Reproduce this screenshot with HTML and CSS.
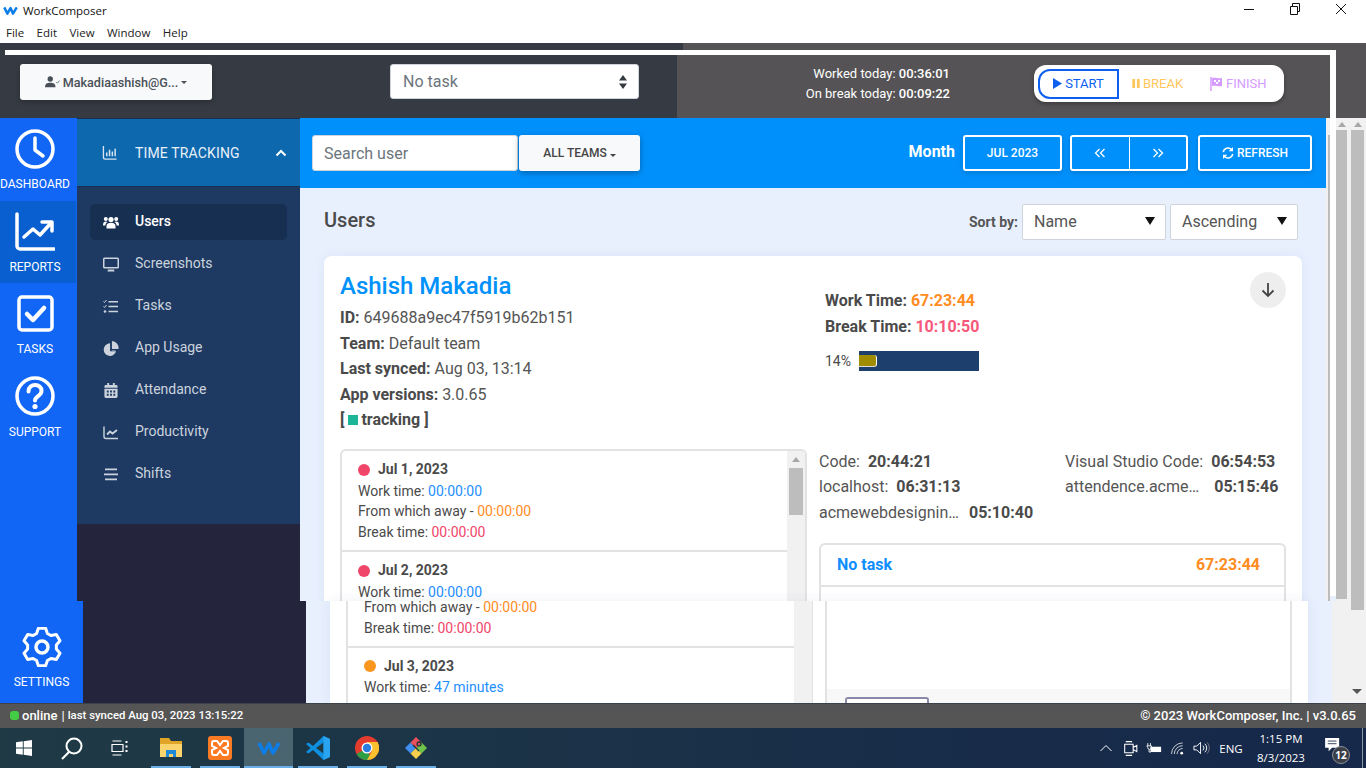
FILE: index.html
```html
<!DOCTYPE html>
<html lang="en">
<head>
<meta charset="utf-8">
<title>WorkComposer</title>
<link rel="stylesheet" href="styles.css">
</head>
<body>
<header class="titlebar">
  <svg class="app-logo" viewBox="0 0 24 16"><path d="M2 3l5 10 5-9 4 9 6-10" fill="none" stroke="#0d7ee8" stroke-width="4" stroke-linejoin="round"/></svg>
  <span class="app-name">WorkComposer</span>
  <div class="winctl">
    <svg viewBox="0 0 12 12"><path d="M1 6.5h10" stroke="#111" stroke-width="1"/></svg>
    <svg viewBox="0 0 12 12"><path d="M1.500 3.500h7v8h-7zM3.500 3.500v-3h7v8h-2" fill="none" stroke="#111"/></svg>
    <svg viewBox="0 0 12 12"><path d="M1 1l10 10M11 1L1 11" stroke="#111"/></svg>
  </div>
</header>
<nav class="menubar"><span>File</span><span>Edit</span><span>View</span><span>Window</span><span>Help</span></nav>

<section class="pane-top">
  <div class="strip"><div class="strip-l"></div><div class="strip-r"></div></div>
  <div class="rule"><div class="rule-l"></div><div class="rule-m"></div><div class="rule-r"></div></div>
  <div class="head">
    <div class="head-l">
      <button class="user-btn">
        <svg class="i-user" viewBox="0 0 20 16"><circle cx="7" cy="4" r="3.600" fill="#495057"/><path d="M0 15c0-5 3-6 7-6s7 1 7 6z" fill="#495057"/><path d="M15 8l1.500 1.500L19.500 6" fill="none" stroke="#495057"/></svg>
        <span>Makadiaashish@G...</span><i class="caret"></i>
      </button>
      <div class="task-select"><span>No task</span>
        <svg class="updown" viewBox="0 0 8 14"><path d="M4 0l4 5.500H0zM4 14l4-5.500H0z" fill="#343a40"/></svg>
      </div>
    </div>
    <div class="head-r">
      <div class="today"><div>Worked today: <b>00:36:01</b></div><div>On break today: <b>00:09:22</b></div></div>
      <div class="timer">
        <div class="t-start"><svg viewBox="0 0 10 12"><path d="M0 0l10 6-10 6z" fill="#0d5ff0"/></svg>START</div>
        <div class="t-break"><svg viewBox="0 0 8 12"><path d="M0 1h3v10H0zM5 1h3v10H5z" fill="#ffc65c"/></svg>BREAK</div>
        <div class="t-finish"><svg viewBox="0 0 13 14"><path d="M1 0v14" stroke="#d69bff" stroke-width="1.500"/><path d="M2 1c4-1 6 1 10 0v8c-4 1-6-1-10 0z" fill="#d69bff"/><path d="M4 3h2v2H4zM8 3h2v2H8zM6 5h2v2H6z" fill="#fff"/></svg>FINISH</div>
      </div>
    </div>
    <div class="head-w"></div>
    <div class="head-e"></div>
  </div>
  <div class="body">
    <aside class="rail">
      <a class="rail-item">
        <svg viewBox="0 0 40 40"><circle cx="20" cy="20" r="18" fill="none" stroke="#fff" stroke-width="3.500"/><path d="M20 9v12l8 6" fill="none" stroke="#fff" stroke-width="3.500" stroke-linecap="round" stroke-linejoin="round"/></svg>
        <span>DASHBOARD</span>
      </a>
      <a class="rail-item active">
        <svg viewBox="0 0 40 40"><path d="M2 2v32a3 3 0 0 0 3 3h34" fill="none" stroke="#fff" stroke-width="3.500" stroke-linecap="round"/><path d="M9 25l9-8 7 6 11-12M27 10h10v9" fill="none" stroke="#fff" stroke-width="3.500" stroke-linecap="round" stroke-linejoin="round"/></svg>
        <span>REPORTS</span>
      </a>
      <a class="rail-item">
        <svg viewBox="0 0 40 40"><rect x="4" y="3" width="33" height="33" rx="3" fill="none" stroke="#fff" stroke-width="3.500"/><path d="M12 20l6 6 11-12" fill="none" stroke="#fff" stroke-width="4.500" stroke-linecap="round" stroke-linejoin="round"/></svg>
        <span>TASKS</span>
      </a>
      <a class="rail-item">
        <svg viewBox="0 0 40 40"><circle cx="20" cy="20" r="18" fill="none" stroke="#fff" stroke-width="3.500"/><path d="M13.500 15.500c0-9 13.500-8 13-.5 0 5-6.500 5-6.500 9.500" fill="none" stroke="#fff" stroke-width="4" stroke-linecap="round"/><circle cx="20" cy="30.500" r="2.600" fill="#fff"/></svg>
        <span>SUPPORT</span>
      </a>
    </aside>
    <aside class="side">
      <div class="side-head">
        <svg class="si" viewBox="0 0 16 16"><path d="M1 1v12a2 2 0 0 0 2 2h12" fill="none" stroke="#d8e4f0" stroke-width="1.400"/><path d="M4.500 8v4M7.500 5v7M10.500 7v5M13.500 4v8" stroke="#d8e4f0" stroke-width="1.600"/></svg>
        <span class="side-title">TIME TRACKING</span>
        <svg class="chev" viewBox="0 0 12 8"><path d="M1.500 6.500L6 2l4.500 4.500" fill="none" stroke="#fff" stroke-width="2"/></svg>
      </div>
      <ul class="side-nav">
        <li class="on"><svg class="si" viewBox="0 0 16 14"><circle cx="8" cy="4" r="2.600"/><circle cx="2.800" cy="3.400" r="2"/><circle cx="13.200" cy="3.400" r="2"/><path d="M3.500 13v-2.500C3.500 8 5.500 7.300 8 7.300s4.500.7 4.500 3.200V13zM0 9.500C0 7 1 6 3 6l1.500.6C3 7.500 2.500 8.500 2.500 10H0zM16 9.500C16 7 15 6 13 6l-1.500.6c1.500.9 2 1.900 2 3.400H16z"/></svg><span>Users</span></li>
        <li><svg class="si" viewBox="0 0 16 14"><path d="M1.500 0h13A1.500 1.500 0 0 1 16 1.500v8a1.500 1.500 0 0 1-1.500 1.500h-13A1.500 1.500 0 0 1 0 9.500v-8A1.500 1.500 0 0 1 1.500 0zM1.500 1.500v8h13v-8zM5 12h6l.5 2h-7z"/></svg><span>Screenshots</span></li>
        <li><svg class="si" viewBox="0 0 16 14"><path d="M.5 2L1.500 3 3.500.5M.5 7L1.500 8l2-2.500" fill="none" stroke="currentColor" stroke-width="1"/><circle cx="2" cy="12" r="1.300"/><path d="M5.500 1.500H15v1.500H5.500zM5.500 6.300H15v1.500H5.500zM5.500 11.200H15v1.500H5.500z"/></svg><span>Tasks</span></li>
        <li><svg class="si" viewBox="0 0 16 16"><path d="M7 2.500a6.700 6.700 0 1 0 6.400 8.500H7zM9 0v8.500h7A7.500 7.500 0 0 0 9 0zM9 10h3.500l.5-.5H9z"/></svg><span>App Usage</span></li>
        <li><svg class="si" viewBox="0 0 14 16"><path d="M3 0h2v2h4V0h2v2h1.500A1.500 1.500 0 0 1 14 3.500V5H0V3.500A1.500 1.500 0 0 1 1.500 2H3zM0 6h14v8.500a1.500 1.500 0 0 1-1.500 1.500h-11A1.500 1.500 0 0 1 0 14.500z"/><path d="M2.500 8h2v2h-2zM6 8h2v2H6zM9.500 8h2v2h-2zM2.500 11.500h2v2h-2zM6 11.500h2v2H6zM9.500 11.500h2v2h-2z" fill="#1e3a63"/></svg><span>Attendance</span></li>
        <li><svg class="si" viewBox="0 0 16 14"><path d="M1 1v10a2 2 0 0 0 2 2h12" fill="none" stroke="currentColor" stroke-width="1.400"/><path d="M4 9l3-3 2.500 2L14 4.500" fill="none" stroke="currentColor" stroke-width="1.800"/></svg><span>Productivity</span></li>
        <li><svg class="si" viewBox="0 0 16 14"><path d="M2 1h12v1.700H2zM1 6h14v1.700H1zM2 11h12v1.700H2z"/></svg><span>Shifts</span></li>
      </ul>
    </aside>
    <main class="main">
      <div class="toolbar">
        <div class="search">Search user</div>
        <button class="teams">ALL TEAMS<i class="caret"></i></button>
        <span class="month">Month</span>
        <button class="tb-btn b-date">JUL 2023</button>
        <div class="tb-btn b-group">
          <span><svg viewBox="0 0 12 10"><path d="M5.500 1L1.500 5l4 4M10.500 1L6.500 5l4 4" fill="none" stroke="#fff" stroke-width="1.300"/></svg></span>
          <span><svg viewBox="0 0 12 10"><path d="M1.500 1l4 4-4 4M6.500 1l4 4-4 4" fill="none" stroke="#fff" stroke-width="1.300"/></svg></span>
        </div>
        <button class="tb-btn b-refresh"><svg viewBox="0 0 14 14"><path d="M1.500 6A5.500 5.500 0 0 1 11 3M12.500 8A5.500 5.500 0 0 1 3 11" fill="none" stroke="#fff" stroke-width="1.800"/><path d="M12.800 0v5h-5zM1.200 14V9h5z" fill="#fff"/></svg>REFRESH</button>
      </div>
      <div class="content">
        <div class="title-row">
          <h2>Users</h2>
          <label class="sort-label">Sort by:</label>
          <div class="fake-select s-name">Name<i class="tri"></i></div>
          <div class="fake-select s-order">Ascending<i class="tri"></i></div>
        </div>
        <article class="card">
          <div class="card-top">
            <div class="who">
              <h3>Ashish Makadia</h3>
              <p><b>ID:</b> 649688a9ec47f5919b62b151</p>
              <p><b>Team:</b> Default team</p>
              <p><b>Last synced:</b> Aug 03, 13:14</p>
              <p><b>App versions:</b> 3.0.65</p>
              <p><b>[ <i class="sq"></i>tracking ]</b></p>
            </div>
            <div class="totals">
              <p><b>Work Time: <em class="orange">67:23:44</em></b></p>
              <p><b>Break Time: <em class="pink">10:10:50</em></b></p>
              <div class="ratio"><span>14%</span><div class="bar"><div class="fill"></div></div></div>
            </div>
            <div class="round"><svg viewBox="0 0 14 16"><path d="M7 1v13M1.500 8.500L7 14l5.500-5.500" fill="none" stroke="#444" stroke-width="1.800"/></svg></div>
          </div>
          <div class="card-bottom">
            <div class="days">
              <div class="days-list">
                <div class="day">
                  <div class="day-date"><i class="dot red"></i>Jul 1, 2023</div>
                  <div>Work time: <span class="blue">00:00:00</span></div>
                  <div>From which away - <span class="orange">00:00:00</span></div>
                  <div>Break time: <span class="red-t">00:00:00</span></div>
                </div>
                <div class="day">
                  <div class="day-date"><i class="dot red"></i>Jul 2, 2023</div>
                  <div>Work time: <span class="blue">00:00:00</span></div>
                </div>
              </div>
              <div class="days-scroll"><i class="up"></i><div class="days-thumb"></div></div>
            </div>
            <div class="usage">
              <div class="apps">
                <div><span>Code:</span><b>20:44:21</b></div>
                <div><span>Visual Studio Code:</span><b>06:54:53</b></div>
                <div><span>localhost:</span><b>06:31:13</b></div>
                <div class="gap-w"><span>attendence.acme…</span><b>05:15:46</b></div>
                <div class="gap-x"><span>acmewebdesignin…</span><b>05:10:40</b></div>
              </div>
              <div class="taskbox">
                <div class="taskbox-head"><span class="blue">No task</span><span class="orange">67:23:44</span></div>
              </div>
            </div>
          </div>
        </article>
      </div>
    </main>
    <div class="gutter">
      <div class="g-line"><div class="g-thumb"></div></div>
      <div class="g-white"></div>
      <div class="g-track">
        <div class="sb sb1"><i class="up"></i><div class="sb-thumb"></div></div>
        <div class="sb sb2"><i class="up"></i><div class="sb-thumb"></div></div>
      </div>
    </div>
  </div>
</section>

<section class="pane-low">
  <div class="low-rail">
    <svg viewBox="0 0 40 40"><path d="M14.570 6.560L16.380 1.350H23.620L25.430 6.560L28.930 8.570L34.340 7.540L37.970 13.810L34.360 17.980V22.020L37.970 26.190L34.340 32.460L28.930 31.430L25.430 33.440L23.620 38.650H16.380L14.570 33.440L11.070 31.430L5.660 32.460L2.030 26.190L5.640 22.020V17.980L2.030 13.810L5.660 7.540L11.070 8.570Z" fill="none" stroke="#fff" stroke-width="3" stroke-linejoin="round"/><circle cx="20" cy="20" r="6" fill="none" stroke="#fff" stroke-width="3.500"/></svg>
    <span>SETTINGS</span>
  </div>
  <div class="low-side"></div>
  <div class="low-main">
    <div class="low-card">
      <div class="low-list">
        <div class="low-rows">
          <div class="low-first">From which away - <span class="orange">00:00:00</span></div>
          <div>Break time: <span class="red-t">00:00:00</span></div>
          <div class="low-div"></div>
          <div class="day-date"><i class="dot amber"></i>Jul 3, 2023</div>
          <div>Work time: <span class="blue">47 minutes</span></div>
        </div>
        <div class="low-scroll"></div>
      </div>
      <div class="low-task">
        <div class="low-foot"><div class="foot-btn"></div></div>
      </div>
    </div>
  </div>
  <div class="low-gutter"><div class="low-thumb"></div><i class="down"></i></div>
</section>

<footer class="status">
  <div class="st-l"><i class="online"></i><b class="st-on">online</b><b class="st-sep">|</b><b class="st-sync">last synced Aug 03, 2023 13:15:22</b></div>
  <div class="st-r">© 2023 WorkComposer, Inc. | v3.0.65</div>
</footer>

<div class="taskbar">
  <div class="tb-sys"><svg class="w16" viewBox="0 0 16 16"><path d="M0 2.300l6.800-1v6.300H0zM7.700 1.200L16 0v7.600H7.700zM0 8.500h6.800v6.300L0 13.700zM7.700 8.500H16V16l-8.300-1.200z" fill="#fff"/></svg></div>
  <div class="tb-sys"><svg class="w24" viewBox="0 0 24 24"><circle cx="14" cy="10" r="7.500" fill="none" stroke="#fff" stroke-width="2"/><path d="M9 16l-7 7" stroke="#fff" stroke-width="2.200"/></svg></div>
  <div class="tb-sys"><svg class="w18" viewBox="0 0 18 16"><path d="M1.500 1h9M1.500 15h9M1 4.500h11v7H1z" fill="none" stroke="#fff" stroke-width="1.200"/><path d="M14.500 1h2v2h-2zM14.500 5.500h2v2h-2zM14.500 10h2v2h-2z" fill="#fff"/></svg></div>
  <div class="tb-app">
    <svg class="w24" viewBox="0 0 24 24"><path d="M1 2h9l2 3h11v4H1z" fill="#e0a526"/><path d="M1 8h22v13H1z" fill="#fbd46d"/><path d="M7 14h10v7h-3v-3h-4v3H7z" fill="#1f88d8"/></svg>
  </div>
  <div class="tb-app">
    <svg class="w24" viewBox="0 0 24 24"><rect x="0" y="0" width="24" height="24" rx="3" fill="#fb7a24"/><path d="M6 5h3l3 4 3-4h3a2 2 0 0 1 2 2v3l-4 2 4 2v3a2 2 0 0 1-2 2h-3l-3-4-3 4H6a2 2 0 0 1-2-2v-3l4-2-4-2V7a2 2 0 0 1 2-2z" fill="none" stroke="#fff" stroke-width="2"/></svg>
  </div>
  <div class="tb-app active">
    <svg class="w24" viewBox="0 0 24 16"><path d="M2 3l5 10 5-9 4 9 6-10" fill="none" stroke="#0d7ee8" stroke-width="3.600" stroke-linejoin="round"/></svg>
  </div>
  <div class="tb-app">
    <svg class="w24" viewBox="0 0 24 24"><path d="M17.500 0L7 10 2.500 6.500 0 8l4.500 4L0 16l2.500 1.500L7 14l10.500 10 6.500-3V3z" fill="#0e8fe0"/><path d="M17.500 6.500L10 12l7.500 5.500z" fill="#1f3a45"/><path d="M17.500 0L24 3v18l-6.500 3z" fill="#2aa4f0"/></svg>
  </div>
  <div class="tb-app">
    <svg class="w24" viewBox="0 0 24 24"><circle cx="12" cy="12" r="12" fill="#e33b2e"/><path d="M12 12L1.600 18a12 12 0 0 0 10.400 6 12 12 0 0 0 4-.7z" fill="#2f9e44"/><path d="M12 6h10.500A12 12 0 0 1 12 24l5-9z" fill="#fbc02d"/><circle cx="12" cy="12" r="5.500" fill="#fff"/><circle cx="12" cy="12" r="4.200" fill="#2a7de1"/></svg>
  </div>
  <div class="tb-app">
    <svg class="w24" viewBox="0 0 24 24"><path d="M12 12L6.500 6.500 1 12l5.500 5.500z" fill="#3f8ef0"/><path d="M12 12l5.500-5.500L23 12l-5.500 5.500z" fill="#6fc24a"/><path d="M6.500 6.500L12 1l5.500 5.500L12 12z" fill="#e8505b"/><path d="M6.500 17.500L12 12l5.500 5.500L12 23z" fill="#f6d04d"/><path d="M15 10a2 2 0 1 1 .1 0M9 9l6 6" stroke="#23313a" stroke-width="1.400" fill="none"/></svg>
  </div>
  <div class="tray">
    <div class="t1"><svg class="t-caret" viewBox="0 0 12 8"><path d="M.5 7L6 1.500 11.500 7" fill="none" stroke="#fff"/></svg></div>
    <div class="t1"><svg class="t-meet" viewBox="0 0 14 18"><path d="M1.500 5h8v8h-8zM9.500 8l3.500-2v6l-3.500-2M2.500 2.500h6M2.500 15.500h6" fill="none" stroke="#fff"/></svg></div>
    <div class="t1"><svg viewBox="0 0 18 14"><path d="M5 5h12v6H5z" fill="#fff"/><path d="M2 1v3M5 1v3M1 4h5v2a2 2 0 0 1-4 0zM3.500 8v3h2" fill="none" stroke="#fff"/></svg></div>
    <div class="t1"><svg viewBox="0 0 16 14"><path d="M1 13a12 12 0 0 1 12-12M4 13a9 9 0 0 1 9-9M7 13a6 6 0 0 1 6-6" fill="none" stroke="#d0d8dc" stroke-width="1"/><circle cx="12" cy="12" r="1.500" fill="#fff"/></svg></div>
    <div class="t2"><svg viewBox="0 0 18 14"><path d="M1 5h3l4-4v12l-4-4H1z" fill="none" stroke="#fff"/><path d="M10.500 4.500a3.500 3.500 0 0 1 0 5M12.500 2.500a6 6 0 0 1 0 9" fill="none" stroke="#fff"/><path d="M15 1a9 9 0 0 1 0 12" fill="none" stroke="#778"/></svg></div>
    <div class="t-eng">ENG</div>
    <div class="t-time"><div>1:15 PM</div><div>8/3/2023</div></div>
    <div class="t-note"><svg viewBox="0 0 18 16"><path d="M0 0h16v11H8l-4 4v-4H0z" fill="#fff"/><path d="M3 3.500h10M3 6.500h10" stroke="#1a2f42"/></svg><span>12</span></div>
    <div class="t-end"></div>
  </div>
</div>
</body>
</html>
```
FILE: styles.css
```css
* { box-sizing: border-box; }
html, body { margin: 0; height: 100%; }
body { width: 1366px; height: 768px; overflow: hidden; font-family: Roboto, "Liberation Sans", sans-serif; color: #4a4a4a; background: #fff; }
button { font-family: inherit; margin: 0; cursor: pointer; }
h2, h3, p, ul { margin: 0; padding: 0; }
i, em { font-style: normal; }
svg { display: block; flex: none; }

.titlebar { height: 22px; display: flex; align-items: center; padding-left: 3px; font-family: "Open Sans", "Liberation Sans", sans-serif; font-size: 11.500px; color: #111; }
.app-logo { width: 15px; height: 11px; margin-top: -2px; }
.app-name { margin-left: 5px; margin-top: -2px; }
.winctl { margin-left: auto; display: flex; margin-top: -4px; padding-right: 19px; gap: 34px; }
.winctl svg { width: 12px; height: 12px; }
.menubar { height: 21px; display: flex; gap: 12.400px; padding-left: 6px; font-family: "Open Sans", "Liberation Sans", sans-serif; font-size: 11.500px; line-height: 21px; color: #222; }

.pane-top { height: 558px; overflow: hidden; display: flex; flex-direction: column; }
.strip { height: 7px; display: flex; flex: none; }
.strip-l { width: 683px; background: #363a42; }
.strip-r { flex: 1; background: #555355; }
.rule { height: 5px; display: flex; flex: none; }
.rule-l { width: 5px; background: #363a42; }
.rule-m { width: 1331px; background: #fff; }
.rule-r { flex: 1; background: #555355; }
.head { height: 63px; display: flex; flex: none; }
.head-l { width: 677px; background: #363a42; display: flex; align-items: flex-start; padding: 9px 0 0 20px; }
.user-btn { width: 192px; height: 36px; border: 0; border-radius: 3px; background: #f8f9fa; display: flex; align-items: center; justify-content: center; color: #495057; font-size: 12.600px; font-weight: 500; box-shadow: 0 2px 5px rgba(0,0,0,.25); padding: 0; }
.i-user { width: 15px; height: 12px; margin-right: 3px; }
.caret { display: inline-block; width: 0; height: 0; border: 3.500px solid transparent; border-top-color: currentColor; border-bottom: 0; margin-left: 3px; }
.task-select { width: 249px; height: 35px; margin-left: 178px; background: #fff; border-radius: 3px; border: 1px solid #ced4da; display: flex; align-items: center; justify-content: space-between; padding: 0 12px; color: #6c757d; font-size: 16px; }
.updown { width: 8px; height: 14px; margin-right: -1px; }
.head-r { width: 653px; background: #555355; display: flex; padding: 10px 0 0 127px; color: #fff; font-size: 13px; line-height: 20px; }
.today { width: 146px; text-align: right; margin-top: -1px; }
.today b { font-weight: 500; }
.timer { width: 250px; height: 37px; margin-left: 84px; background: #fff; border-radius: 12px; display: flex; align-items: center; padding-left: 4px; font-size: 13px; box-shadow: 0 2px 4px rgba(0,0,0,.3); }
.t-start { width: 81px; height: 30px; border: 2px solid #0d5ff0; border-radius: 12px 0 0 12px; color: #0d5ff0; display: flex; align-items: center; justify-content: center; }
.t-start svg { width: 9px; height: 11px; margin-right: 3px; }
.t-break { width: 78px; display: flex; align-items: center; color: #ffc65c; padding-left: 13px; }
.t-break svg { width: 8px; height: 11px; margin-right: 3px; }
.t-finish { display: flex; align-items: center; color: #d69bff; margin-left: 13px; }
.t-finish svg { width: 13px; height: 14px; margin-right: 3px; }
.head-w { width: 6px; background: #fff; }
.head-e { flex: 1; background: #555355; }

.body { height: 483px; display: flex; flex: none; }
.rail { width: 77px; background: #1166f6; flex: none; }
.rail-item { display: flex; flex-direction: column; align-items: center; height: 82px; padding: 11px 6px 0 0; color: #fff; font-size: 12px; width: 76px; }
.rail-item:first-child { height: 83px; }
.rail-item svg { width: 40px; height: 40px; }
.rail-item span { margin-top: 9px; line-height: 13px; white-space: nowrap; }
.rail-item:last-child span { margin-top: 10px; }
.rail-item.active { background: #0a5fd0; }
.side { width: 223px; background: #24243c; flex: none; }
.side-head { height: 69px; background: #0e68ae; border-top: 1px solid #1d2d50; border-bottom: 1px solid #1a3050; display: flex; align-items: center; padding-left: 25px; color: #e8f0f8; font-size: 14px; }
.si { width: 16px; height: 15px; fill: currentColor; }
.side-title { margin-left: 17px; letter-spacing: .15px; padding-top: 1px; }
.chev { width: 12px; height: 8px; margin-left: auto; margin-right: 13px; }
.side-nav { list-style: none; height: 337px; background: #1e3a63; padding: 17px 13px 0; color: #ccd3dd; font-size: 14px; }
.side-nav li { height: 36px; margin-bottom: 6px; display: flex; align-items: center; padding-left: 13px; border-radius: 5px; }
.side-nav li span { margin-top: -2px; }
.side-nav li .si { margin-right: 16px; }
.side-nav li.on { background: #172f50; color: #fff; font-weight: 500; }

.main { width: 1026px; flex: none; background: #e8f0fe; overflow: hidden; }
.toolbar { height: 70px; background: #0090fb; display: flex; align-items: center; padding: 0 14px 0 12px; }
.search { width: 206px; height: 36px; background: #fff; border: 1px solid #ced4da; border-radius: 3px; color: #6c757d; font-size: 16px; line-height: 35px; padding-left: 11px; }
.teams { width: 121px; height: 36px; margin-left: 1px; border: 0; border-radius: 3px; background: #f8f9fa; color: #444; font-size: 12px; font-weight: 500; box-shadow: 0 2px 6px rgba(0,0,0,.3); }
.month { margin-left: auto; margin-right: 8px; color: #fff; font-size: 16px; font-weight: 700; margin-top: -4px; }
.tb-btn { height: 36px; background: transparent; border: 2px solid #fff; border-radius: 3px; color: #fff; font-size: 12px; font-weight: 500; box-shadow: 0 2px 5px rgba(0,0,0,.15); padding: 0; }
.b-date { width: 99px; }
.b-group { width: 118px; margin-left: 8px; display: flex; }
.b-group span { flex: 1; display: flex; align-items: center; justify-content: center; }
.b-group span + span { border-left: 1px solid #fff; }
.b-group svg { width: 12px; height: 10px; }
.b-refresh { width: 114px; margin-left: 10px; display: flex; align-items: center; justify-content: center; }
.b-refresh svg { width: 12px; height: 12px; margin-right: 3px; }

.content { padding: 16px 24px 0; }
.title-row { height: 36px; display: flex; align-items: center; margin-right: 4px; }
h2 { font-size: 20px; font-weight: 500; margin: -4px auto 0 0; color: #4a4a4a; }
.sort-label { font-size: 14px; font-weight: 700; color: #555; margin-right: 4px; }
.fake-select { height: 36px; background: #fff; border: 1px solid #ced4da; border-radius: 2px; font-size: 16px; display: flex; align-items: center; justify-content: space-between; padding: 0 10px 2px 11px; color: #555; }
.s-name { width: 144px; }
.s-order { width: 128px; margin-left: 4px; }
.tri { width: 0; height: 0; border: 5px solid transparent; border-top: 8px solid #111; border-bottom: 0; }

.card { margin-top: 16px; background: #fff; border-radius: 8px; box-shadow: 0 0 12px rgba(40,70,130,.06); padding: 16px; height: 400px; }
.card-top { display: flex; height: 177px; }
.who { width: 485px; font-size: 16px; line-height: 25.600px; }
.who h3 { font-size: 24px; font-weight: 500; color: #0091fb; line-height: 28px; margin-bottom: 5px; }
.who b { font-weight: 700; color: #4a4a4a; }
.who p { color: #555; }
.sq { display: inline-block; width: 10px; height: 10px; background: #1db597; margin-right: 3px; }
.totals { width: 154px; padding-top: 16px; font-size: 16px; line-height: 26px; white-space: nowrap; }
.orange { color: #ff8c1e; }
.pink { color: #f7587a; }
.blue { color: #1e8fff; }
.red-t { color: #f0466a; }
.ratio { display: flex; align-items: center; font-size: 14px; height: 20px; margin-top: 11px; }
.ratio span { width: 34px; }
.bar { width: 120px; height: 20px; background: #1d3f6e; padding-top: 4px; }
.fill { width: 18px; height: 12px; background: #a08c00; border-right: 1px solid #fff; border-bottom: 1px solid #ddd; border-radius: 0 3px 3px 0; }
.round { width: 36px; height: 36px; border-radius: 50%; background: #eee; margin-left: auto; display: flex; align-items: center; justify-content: center; }
.round svg { width: 14px; height: 16px; }

.card-bottom { display: flex; }
.days { width: 467px; height: 170px; border: 2px solid #e2e2e2; border-bottom: 0; border-radius: 6px 6px 0 0; display: flex; overflow: hidden; font-size: 14px; line-height: 20.670px; }
.days-list { flex: 1; }
.day { height: 101px; padding: 8px 16px; border-bottom: 2px solid #e2e2e2; }
.day-date { font-weight: 700; line-height: 21.500px; display: flex; align-items: center; color: #4a4a4a; }
.dot { width: 12px; height: 12px; border-radius: 50%; margin-right: 8px; }
.red { background: #f0466a; }
.amber { background: #fa961e; }
.days-scroll { width: 18px; background: #f1f1f1; display: flex; flex-direction: column; align-items: center; padding-top: 6px; }
.up { display: block; width: 0; height: 0; border: 4px solid transparent; border-bottom: 5px solid #a8a8a8; border-top: 0; }
.days-thumb { width: 14px; height: 47px; margin-top: 6px; background: #bdbdbd; }
.usage { width: 467px; margin-left: 12px; }
.apps { height: 94px; display: grid; grid-template-columns: 246px 1fr; grid-template-rows: 25px 26px 25px; font-size: 16px; line-height: 25px; color: #555; }
.apps div { display: flex; gap: 8px; white-space: nowrap; }
.apps .gap-w { gap: 15px; }
.apps .gap-x { gap: 10px; }
.apps b { font-weight: 700; color: #4a4a4a; }
.taskbox { border: 2px solid #e2e2e2; border-bottom: 0; border-radius: 6px 6px 0 0; height: 80px; }
.taskbox-head { height: 42px; border-bottom: 2px solid #e2e2e2; display: flex; justify-content: space-between; align-items: center; padding: 0 24px 2px 16px; font-size: 16px; font-weight: 700; }
.taskbox-head .blue { color: #0f8fff; }

.gutter { flex: 1; display: flex; background: #e8f0fe; }
.g-line { width: 4px; background: #f1f1f1; padding: 17px 0 0 2px; }
.g-thumb { width: 2px; height: 100%; background: #bdbdbd; }
.g-white { width: 6px; height: 478px; background: #fff; }
.g-track { flex: 1; background: #f1f1f1; display: flex; gap: 4px; }
.sb { display: flex; flex-direction: column; align-items: center; }
.sb-thumb { background: #bdbdbd; flex: 1; width: 100%; }
.sb1 { width: 11px; padding-bottom: 2px; }
.sb2 { width: 13px; }
.g-track .up { margin: 4px 0 3px; height: 5px; }

.pane-low { height: 102px; display: flex; }
.low-rail { width: 83px; background: #1166f6; display: flex; flex-direction: column; align-items: center; padding-top: 26px; color: #fff; font-size: 12px; }
.low-rail svg { width: 40px; height: 40px; }
.low-rail span { margin-top: 9px; line-height: 13px; }
.low-side { width: 223px; background: #24243c; }
.low-main { width: 1026px; background: #e8f0fe; padding: 0 24px; }
.low-card { height: 102px; background: #fff; box-shadow: 0 0 12px rgba(40,70,130,.08); display: flex; padding-left: 16px; }
.low-list { width: 467px; border-left: 2px solid #e2e2e2; border-right: 1px solid #e2e2e2; display: flex; font-size: 14px; line-height: 20.670px; }
.low-rows { flex: 1; padding: 0 16px; }
.low-first { line-height: 13px; margin-bottom: 4px; }
.low-div { height: 2px; background: #e2e2e2; margin: 7px -16px 8px; }
.low-scroll { width: 18px; background: #f1f1f1; }
.low-task { width: 467px; margin-left: 12px; border-left: 2px solid #e2e2e2; border-right: 2px solid #e2e2e2; display: flex; flex-direction: column; justify-content: flex-end; }
.low-foot { height: 14px; background: #f8f8f8; padding: 8px 0 0 18px; }
.foot-btn { width: 84px; height: 6px; border: 2px solid #8a8aa8; border-bottom: 0; border-radius: 3px 3px 0 0; background: #fff; }
.low-gutter { flex: 1; background: #f1f1f1; display: flex; flex-direction: column; align-items: flex-end; padding-right: 2px; }
.low-thumb { width: 13px; height: 9px; background: #bdbdbd; }
.down { width: 0; height: 0; margin: 79px 2px 0 0; border: 5px solid transparent; border-top: 5px solid #555; border-bottom: 0; }

.status { height: 25px; background: #555; border-top: 1px solid #3d4249; display: flex; align-items: center; justify-content: space-between; color: #fff; font-size: 13px; padding: 0 10px 2px; }
.st-l { display: flex; align-items: center; }
.online { width: 9px; height: 9px; background: #45cc45; border-radius: 3px; margin-right: 3px; }
.st-on { font-size: 13px; font-weight: 500; }
.st-sep { margin: 0 3px 0 4px; font-weight: 400; }
.st-sync { font-weight: 500; font-size: 11.400px; }
.st-r { font-weight: 500; }

.taskbar { height: 40px; display: flex; align-items: center; background: linear-gradient(90deg, #1f3a45, #16294a 90%); color: #fff; font-family: "Open Sans", "Liberation Sans", sans-serif; font-size: 12px; }
.tb-sys { width: 48px; height: 40px; display: flex; align-items: center; justify-content: center; }
.tb-sys + .tb-app { margin-left: 2px; }
.tb-app { width: 49px; height: 40px; display: flex; align-items: center; justify-content: center; position: relative; }
.tb-app::after { content: ""; position: absolute; left: 5px; right: 4px; bottom: 0; height: 2px; background: #6ab0e8; }
.tb-app.active { background: #4a6470; }
.tb-app.active::after { left: 0; right: 0; }
.w16 { width: 16px; height: 16px; }
.w18 { width: 18px; height: 16px; }
.w24 { width: 24px; height: 24px; }
.tray { margin-left: auto; display: flex; align-items: center; height: 40px; }
.t1 { width: 24px; display: flex; justify-content: center; }
.t1 svg { width: 16px; height: 13px; }
.t1 .t-caret { width: 12px; height: 8px; }
.t1 .t-meet { width: 15px; height: 19px; }
.t2 { width: 22px; display: flex; justify-content: center; }
.t2 svg { width: 17px; height: 14px; }
.t-eng { width: 38px; text-align: center; font-size: 11.500px; }
.t-time { width: 62px; text-align: center; line-height: 19px; font-size: 11.500px; }
.t-note { width: 42px; height: 40px; position: relative; display: flex; align-items: center; justify-content: center; }
.t-note svg { width: 16px; height: 14px; margin-top: -6px; }
.t-note span { position: absolute; left: 20px; top: 18px; width: 18px; height: 18px; border-radius: 50%; background: #3a3f47; border: 1px solid #8a8f96; font-size: 10px; font-weight: 700; line-height: 16px; text-align: center; }
.t-end { width: 9px; height: 40px; border-right: 1px solid #8a98a6; margin-right: 3px; flex: none; }
```
